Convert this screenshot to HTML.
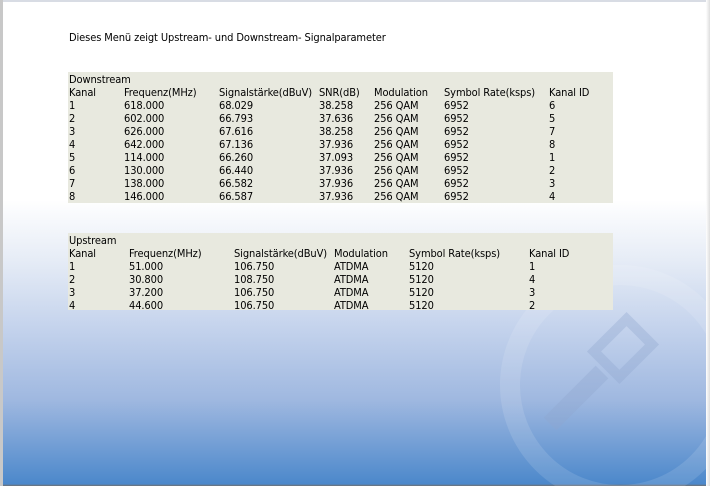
<!DOCTYPE html>
<html style="overflow:hidden"><head><meta charset="utf-8"><style>
*{margin:0;padding:0}
html,body{width:710px;height:486px;overflow:hidden}
body{position:relative;font-family:Tahoma,"DejaVu Sans Condensed","Liberation Sans",sans-serif;font-size:11px;color:#000;
background:linear-gradient(180deg,#fff 0px,#fff 200px,#e6ecf6 260px,#c3d2ec 330px,#9fb8e0 400px,#4c88cb 484px,#707070 486px)}
.lb{position:absolute;left:0;top:0;width:3px;height:486px;background:#c8c8c8}
.rb{position:absolute;right:0;top:0;width:4px;height:486px;background:linear-gradient(90deg,#fff,#ddd)}
.tb{position:absolute;left:0;top:0;width:710px;height:2px;background:#d8dce4}
.t{position:absolute;white-space:nowrap;line-height:13px;letter-spacing:-0.1px}
.box{position:absolute;left:68px;width:545px;background:#e8e9df}
</style></head><body>
<div class="tb"></div><div class="lb"></div><div class="rb"></div>
<svg style="position:absolute;left:470px;top:260px" width="236" height="226" viewBox="0 0 236 226">
<circle cx="150" cy="125" r="110" fill="none" stroke="#fff" stroke-opacity="0.12" stroke-width="20"/>
<g fill="none" stroke="#8fa7cf" stroke-opacity="0.35" stroke-width="10">
<rect x="130" y="70" width="46" height="36" transform="rotate(-45 153 88)"/>
<line x1="132" y1="112" x2="80" y2="164" stroke-width="18"/>
</g></svg>
<div class="t" style="left:69px;top:31px">Dieses Menü zeigt Upstream- und Downstream- Signalparameter</div>
<div class="box" style="top:72px;height:131px"></div>
<div class="box" style="top:233px;height:77px"></div>
<div id="d"></div>
<script>
function tbl(top,cols,title,rows){var h='<div class="t" style="left:69px;top:'+top+'px">'+title+'</div>';
rows.forEach(function(r,i){r.forEach(function(c,j){h+='<div class="t" style="left:'+cols[j]+'px;top:'+(top+13*(i+1))+'px">'+c+'</div>';});});return h;}
var d=[["Kanal","Frequenz(MHz)","Signalstärke(dBuV)","SNR(dB)","Modulation","Symbol Rate(ksps)","Kanal ID"],
["1","618.000","68.029","38.258","256 QAM","6952","6"],["2","602.000","66.793","37.636","256 QAM","6952","5"],
["3","626.000","67.616","38.258","256 QAM","6952","7"],["4","642.000","67.136","37.936","256 QAM","6952","8"],
["5","114.000","66.260","37.093","256 QAM","6952","1"],["6","130.000","66.440","37.936","256 QAM","6952","2"],
["7","138.000","66.582","37.936","256 QAM","6952","3"],["8","146.000","66.587","37.936","256 QAM","6952","4"]];
var u=[["Kanal","Frequenz(MHz)","Signalstärke(dBuV)","Modulation","Symbol Rate(ksps)","Kanal ID"],
["1","51.000","106.750","ATDMA","5120","1"],["2","30.800","108.750","ATDMA","5120","4"],
["3","37.200","106.750","ATDMA","5120","3"],["4","44.600","106.750","ATDMA","5120","2"]];
document.getElementById('d').innerHTML=tbl(73,[69,124,219,319,374,444,549],"Downstream",d)+tbl(234,[69,129,234,334,409,529],"Upstream",u);
</script>
</body></html>
